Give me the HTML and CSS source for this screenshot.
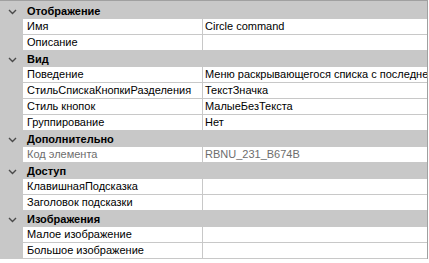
FILE: index.html
```html
<!DOCTYPE html>
<html lang="ru">
<head>
<meta charset="utf-8">
<link rel="stylesheet" href="styles.css">
</head>
<body>
<div class="grid">
  <div class="row cat first"><span class="tog"><svg width="9" height="6" viewBox="0 0 9 6"><path d="M1 1 L4.5 4.5 L8 1" fill="none" stroke="#4a4a4a" stroke-width="1.4"/></svg></span><span class="cat-name">Отображение</span></div>
  <div class="row"><span class="mg"></span><span class="lbl">Имя</span><span class="val">Circle command</span></div>
  <div class="row"><span class="mg"></span><span class="lbl">Описание</span><span class="val"></span></div>
  <div class="row cat"><span class="tog"><svg width="9" height="6" viewBox="0 0 9 6"><path d="M1 1 L4.5 4.5 L8 1" fill="none" stroke="#4a4a4a" stroke-width="1.4"/></svg></span><span class="cat-name">Вид</span></div>
  <div class="row"><span class="mg"></span><span class="lbl">Поведение</span><span class="val">Меню раскрывающегося списка с последней использованной командой</span></div>
  <div class="row"><span class="mg"></span><span class="lbl">СтильСпискаКнопкиРазделения</span><span class="val">ТекстЗначка</span></div>
  <div class="row"><span class="mg"></span><span class="lbl">Стиль кнопок</span><span class="val">МалыеБезТекста</span></div>
  <div class="row"><span class="mg"></span><span class="lbl">Группирование</span><span class="val">Нет</span></div>
  <div class="row cat"><span class="tog"><svg width="9" height="6" viewBox="0 0 9 6"><path d="M1 1 L4.5 4.5 L8 1" fill="none" stroke="#4a4a4a" stroke-width="1.4"/></svg></span><span class="cat-name">Дополнительно</span></div>
  <div class="row ro"><span class="mg"></span><span class="lbl">Код элемента</span><span class="val">RBNU_231_B674B</span></div>
  <div class="row cat"><span class="tog"><svg width="9" height="6" viewBox="0 0 9 6"><path d="M1 1 L4.5 4.5 L8 1" fill="none" stroke="#4a4a4a" stroke-width="1.4"/></svg></span><span class="cat-name">Доступ</span></div>
  <div class="row"><span class="mg"></span><span class="lbl">КлавишнаяПодсказка</span><span class="val"></span></div>
  <div class="row"><span class="mg"></span><span class="lbl">Заголовок подсказки</span><span class="val"></span></div>
  <div class="row cat"><span class="tog"><svg width="9" height="6" viewBox="0 0 9 6"><path d="M1 1 L4.5 4.5 L8 1" fill="none" stroke="#4a4a4a" stroke-width="1.4"/></svg></span><span class="cat-name">Изображения</span></div>
  <div class="row"><span class="mg"></span><span class="lbl">Малое изображение</span><span class="val"></span></div>
  <div class="row"><span class="mg"></span><span class="lbl">Большое изображение</span><span class="val"></span></div>
</div>
</body>
</html>
```
FILE: styles.css
```css
html, body {
  margin: 0;
  padding: 0;
  background: #ffffff;
}
body {
  font-family: "Liberation Sans", Arial, sans-serif;
  font-size: 11px;
  color: #000000;
}
.grid {
  width: 427px;
  border-top: 1px solid #a0a0a0;
  border-right: 1px solid #a0a0a0;
  display: flex;
  flex-direction: column;
  overflow: hidden;
}
.row {
  display: flex;
  height: 16px;
  line-height: 15px;
  white-space: nowrap;
}
.cat {
  background: #c8c8c8;
  line-height: 16px;
}
.cat.first {
  height: 18px;
  padding-top: 2px;
  box-sizing: border-box;
}
.tog {
  width: 23px;
  flex: none;
  display: flex;
  align-items: center;
  justify-content: center;
  padding-left: 1px;
  box-sizing: border-box;
}
.tog svg {
  display: block;
  margin-top: 1px;
}
.cat-name {
  font-weight: bold;
  padding-left: 4px;
}
.mg {
  width: 23px;
  flex: none;
  background: #c8c8c8;
}
.lbl {
  width: 180px;
  flex: none;
  padding-left: 4px;
  box-sizing: border-box;
  border-right: 1px solid #c8c8c8;
  border-bottom: 1px solid #c8c8c8;
  overflow: hidden;
}
.val {
  flex: 1;
  min-width: 0;
  padding-left: 2px;
  border-bottom: 1px solid #c8c8c8;
  overflow: hidden;
}
.ro .lbl, .ro .val {
  color: #6d6d6d;
}
```
